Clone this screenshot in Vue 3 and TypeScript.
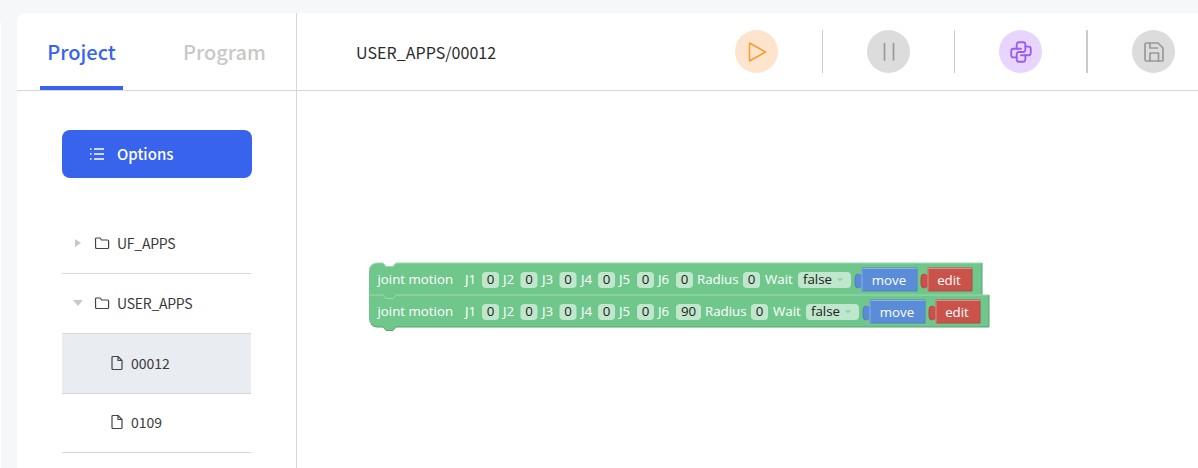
<script setup lang="ts">
interface Field { label: string; lx: number; px: number; pw: number; value: string }
interface BlockRow {
  y: number; width: number; fields: Field[];
  radiusX: number; radiusPillX: number; waitX: number; falseX: number;
  moveX: number; editX: number;
}
const base = (lastW: number): Field[] => [
  { label: 'J1', lx: 96, px: 113, pw: 17, value: '0' },
  { label: 'J2', lx: 134, px: 151.5, pw: 17, value: '0' },
  { label: 'J3', lx: 173, px: 190.5, pw: 17, value: '0' },
  { label: 'J4', lx: 212, px: 229, pw: 17, value: '0' },
  { label: 'J5', lx: 250, px: 268, pw: 17, value: '0' },
  { label: 'J6', lx: 289, px: 307, pw: lastW, value: lastW > 20 ? '90' : '0' },
]
const rows: BlockRow[] = [
  { y: 0, width: 613, fields: base(17), radiusX: 328, radiusPillX: 374, waitX: 396, falseX: 429, moveX: 486, editX: 552 },
  { y: 32, width: 620, fields: base(25), radiusX: 336, radiusPillX: 382, waitX: 404, falseX: 437, moveX: 494, editX: 560 },
]
const H = 32
const topEdge = (r: BlockRow, i: number) =>
  (i === 0 ? 'M0 8 a8 8 0 0 1 8-8' : 'M0 0') + ` H14 l3 3.500 h7 l3-3.500 H${r.width}`
const bodyPath = (r: BlockRow, i: number) => {
  const bottom = i === rows.length - 1
    ? `V${H} H27 l-3 3.500 h-7 l-3-3.500 H8 a8 8 0 0 1-8-8`
    : `V${H} H27 l-3 3.500 h-7 l-3-3.500 H0`
  return `${topEdge(r, i)} ${bottom} Z`
}
const darkEdge = (r: BlockRow, i: number) =>
  `M${r.width} 0 V${H}` + (i === rows.length - 1 ? ' H27 l-3 3.500 h-7 l-3-3.500 H8 a8 8 0 0 1-6-3' : '')
const puzzle = (x: number, w: number) =>
  `M${x + 7} 5 h${w} v23 h-${w} v-5 l-4 2 q-3 0-3-4 v-6 q0-4 3-4 l4 2z`
</script>

<template>
  <div class="page">
    <div class="sliver"></div>
    <div class="card">
      <header class="head">
        <nav class="tabs">
          <span class="tab active">Project</span>
          <span class="tab">Program</span>
        </nav>
        <div class="title">USER_APPS/00012</div>
        <div class="tools">
          <span class="tool orange">
            <svg viewBox="0 0 24 24"><path d="M4.500 3v18l16-9z" /></svg>
          </span>
          <i class="rule"></i>
          <span class="tool grey">
            <svg viewBox="0 0 24 24"><path d="M7.500 3.500v16.500M16.500 3.500v16.500" /></svg>
          </span>
          <i class="rule"></i>
          <span class="tool purple">
            <svg viewBox="0 0 24 24">
              <path d="M12 9H5a2 2 0 0 0-2 2v4a2 2 0 0 0 2 2h3" />
              <path d="M12 15h7a2 2 0 0 0 2-2V9a2 2 0 0 0-2-2h-3" />
              <path d="M8 9V5a2 2 0 0 1 2-2h4a2 2 0 0 1 2 2v5a2 2 0 0 1-2 2h-4a2 2 0 0 0-2 2v5a2 2 0 0 0 2 2h4a2 2 0 0 0 2-2v-4" />
            </svg>
          </span>
          <i class="rule wide"></i>
          <span class="tool grey">
            <svg viewBox="0 0 24 24">
              <path d="M4.500 3h11.500l5 5v12a1 1 0 0 1-1 1H4.500a1.500 1.500 0 0 1-1.500-1.500V4.500A1.500 1.500 0 0 1 4.500 3z" />
              <path d="M8 21v-8h8.500v8M8 3v5h7.500" />
            </svg>
          </span>
        </div>
      </header>
      <div class="body">
        <aside class="side">
          <button class="options">
            <svg viewBox="0 0 16 16" class="list">
              <path d="M5 3h10M5 8h10M5 13h10" />
              <path d="M1 3h1.500M1 8h1.500M1 13h1.500" />
            </svg>
            <span class="options-label">Options</span>
          </button>
          <ul class="tree">
            <li class="row folder">
              <span class="arrow right"></span>
              <svg class="ico" viewBox="0 0 16 16"><path d="M1.500 4a1 1 0 0 1 1-1h3.600l1.500 2h6a1 1 0 0 1 1 1v6.500a1 1 0 0 1-1 1h-11a1 1 0 0 1-1-1z" /></svg>
              <span>UF_APPS</span>
            </li>
            <li class="row folder">
              <span class="arrow down"></span>
              <svg class="ico" viewBox="0 0 16 16"><path d="M1.500 4a1 1 0 0 1 1-1h3.600l1.500 2h6a1 1 0 0 1 1 1v6.500a1 1 0 0 1-1 1h-11a1 1 0 0 1-1-1z" /></svg>
              <span>USER_APPS</span>
            </li>
            <li class="row file selected">
              <svg class="ico small" viewBox="0 0 14 16"><path d="M2 2.500a1 1 0 0 1 1-1h5l4 4v8a1 1 0 0 1-1 1H3a1 1 0 0 1-1-1z" /><path d="M8 1.500v4h4" /></svg>
              <span>00012</span>
            </li>
            <li class="row file">
              <svg class="ico small" viewBox="0 0 14 16"><path d="M2 2.500a1 1 0 0 1 1-1h5l4 4v8a1 1 0 0 1-1 1H3a1 1 0 0 1-1-1z" /><path d="M8 1.500v4h4" /></svg>
              <span>0109</span>
            </li>
          </ul>
        </aside>
        <main class="canvas">
          <svg class="blocks" width="640" height="80" viewBox="0 0 640 80">
            <g v-for="(r, i) in rows" :key="r.y" :transform="`translate(0 ${r.y + 5})`">
              <path class="green" :d="bodyPath(r, i)" />
              <path class="edge-light" :d="topEdge(r, i)" />
              <path class="edge-dark" :d="darkEdge(r, i)" />
              <text class="t" x="8.500" y="20.500">joint motion</text>
              <template v-for="f in r.fields" :key="f.label">
                <text class="t" :x="f.lx" y="20.500">{{ f.label }}</text>
                <rect class="pill" :x="f.px" y="9" :width="f.pw" height="16" rx="4" />
                <text class="v" :x="f.px + f.pw / 2" y="21" text-anchor="middle">{{ f.value }}</text>
              </template>
              <text class="t" :x="r.radiusX" y="20.500">Radius</text>
              <rect class="pill" :x="r.radiusPillX" y="9" width="17" height="16" rx="4" />
              <text class="v" :x="r.radiusPillX + 8.500" y="21" text-anchor="middle">0</text>
              <text class="t" :x="r.waitX" y="20.500">Wait</text>
              <rect class="pill" :x="r.falseX" y="9" width="53" height="16" rx="4" />
              <text class="v" :x="r.falseX + 5" y="21">false</text>
              <path class="caret" :d="`M${r.falseX + 39} 15.500h6l-3 3z`" />
              <path class="blue" :d="puzzle(r.moveX, 55)" />
              <path class="blue-light" :d="`M${r.moveX + 7} 28 V5.500 H${r.moveX + 62}`" />
              <text class="w" :x="r.moveX + 34" y="21.500" text-anchor="middle">move</text>
              <path class="red" :d="puzzle(r.editX, 44)" />
              <path class="red-light" :d="`M${r.editX + 7} 28 V5.500 H${r.editX + 51}`" />
              <text class="w" :x="r.editX + 28" y="21.500" text-anchor="middle">edit</text>
            </g>
          </svg>
        </main>
      </div>
    </div>
  </div>
</template>

<style>
html, body { margin: 0; background: #f6f7f9; }
</style>

<style scoped>
.page {
  display: flex;
  height: 468px;
  overflow: hidden;
  background: #f6f7f9;
  padding-top: 13px;
  box-sizing: border-box;
  font-family: "Noto Sans CJK SC", "Noto Sans", sans-serif;
  color: #333;
}
.sliver { width: 1px; margin-top: 9px; margin-right: 16px; background: #fff; }
.card { flex: 1; min-width: 0; }
.head {
  display: flex;
  align-items: stretch;
  height: 77px;
  background: #fff;
  border-radius: 8px 0 0 0;
  border-bottom: 1px solid #d6d6d6;
}
.tabs {
  width: 280px;
  box-sizing: border-box;
  border-right: 1px solid #d6d6d6;
  padding-left: 23px;
  display: flex;
  gap: 60px;
}
.tab {
  position: relative;
  font-size: 20px;
  font-weight: 500;
  line-height: 77px;
  color: #c8c8c8;
}
.tab.active { width: 83px; text-align: center; color: #3763ed; }
.tab.active::after {
  content: "";
  position: absolute;
  left: 0; right: 0; bottom: 0;
  height: 4px;
  background: #3763ed;
}
.title { margin-left: 59px; font-size: 16px; letter-spacing: 0.05px; font-weight: 400; line-height: 79px; color: #2b2b2b; }
.tools { margin-left: auto; margin-right: 23px; display: flex; align-items: center; }
.tool { width: 43px; height: 43px; border-radius: 50%; display: flex; align-items: center; justify-content: center; }
.tool svg { width: 24px; height: 24px; fill: none; stroke-width: 1.700; stroke-linecap: round; stroke-linejoin: round; }
.orange { background: #fee4cd; }
.orange svg { stroke: #fb9a2d; stroke-width: 1.500; }
.grey { background: #dcdcdc; }
.grey svg { stroke: #999; }
.purple { background: #e8d5fd; }
.purple svg { width: 26px; height: 26px; stroke: #9a5cf0; }
.rule { width: 1px; height: 43px; background: #ccc; margin: 0 44px; }
.rule.wide { width: 2px; }
.body { display: flex; height: 377px; background: #fff; border-radius: 8px 0 0 0; }
.side { width: 280px; box-sizing: border-box; border-right: 1px solid #d6d6d6; padding: 39px 45px 0; flex: none; }
.options {
  width: 190px;
  height: 48px;
  border: 0;
  border-radius: 8px;
  background: #3763ed;
  color: #fff;
  font: 500 15px "Noto Sans CJK SC", "Noto Sans", sans-serif;
  display: flex;
  align-items: center;
  gap: 12px;
  padding: 0 0 0 27px;
}
.options-label { position: relative; top: -1px; }
.list { width: 16px; height: 16px; fill: none; stroke: #fff; stroke-width: 1.300; }
.tree { list-style: none; margin: 36px 0 0; padding: 0; width: 189px; font-size: 14px; color: #3a3a3a; }
.row {
  height: 60px;
  box-sizing: border-box;
  border-bottom: 1px solid #d6d6d6;
  display: flex;
  align-items: center;
  padding: 0 0 2px 13px;
}
.row:last-child { height: 59px; }
.row.folder { letter-spacing: -0.25px; }
.row.file { padding-left: 48px; }
.row.selected { background: #e9ecf1; }
.arrow { width: 0; height: 0; flex: none; border-style: solid; border-color: transparent; }
.arrow.right { border-width: 4.500px 0 4.500px 6px; border-left-color: #c4c8d0; margin-right: 13px; }
.arrow.down { border-width: 6px 5px 0 5px; border-top-color: #c4c8d0; margin-left: -2px; margin-right: 11px; }
.ico { width: 16px; height: 16px; fill: none; stroke: #444; stroke-width: 1.200; stroke-linejoin: round; margin-right: 7px; flex: none; }
.ico.small { width: 14px; margin-right: 7px; }
.canvas { flex: 1; min-width: 0; position: relative; }
.blocks { position: absolute; left: 72px; top: 167px; }
.green { fill: #70c78c; }
.edge-light { fill: none; stroke: #9bd8af; stroke-width: 1; }
.edge-dark { fill: none; stroke: #57a26f; stroke-width: 1; }
.t { font: 13.300px "Open Sans", "Noto Sans", sans-serif; fill: #fff; }
.v { font: 13.300px "Open Sans", "Noto Sans", sans-serif; fill: #222; }
.pill { fill: #c0e6cc; }
.caret { fill: #8fd3a6; }
.blue { fill: #5a8cd8; stroke: #5380c4; stroke-width: 1; }
.blue-light { fill: none; stroke: #8ab0e6; stroke-width: 1; }
.red { fill: #c9524b; stroke: #b24a44; stroke-width: 1; }
.red-light { fill: none; stroke: #e08e88; stroke-width: 1; }
.w { font: 13.300px "Open Sans", "Noto Sans", sans-serif; fill: #fff; }
</style>
